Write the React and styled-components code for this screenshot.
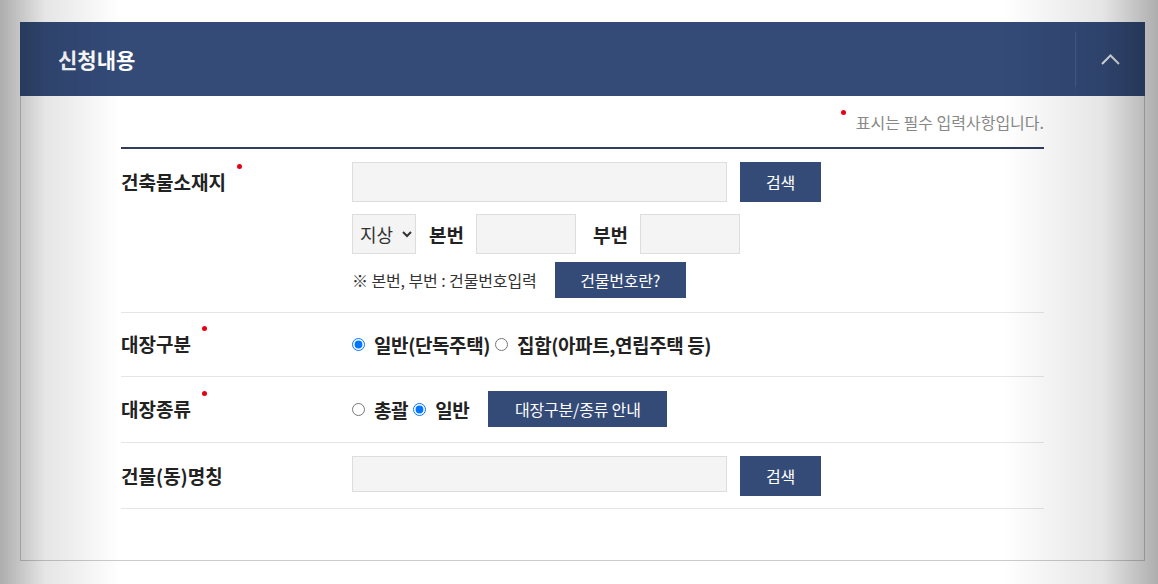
import React from "react";
import styled, { createGlobalStyle } from "styled-components";

const GlobalStyle = createGlobalStyle`
  html, body {
    margin: 0;
    padding: 0;
    background: #fff;
  }
  body {
    font-family: "Noto Sans CJK KR", "Noto Sans", sans-serif;
    color: #222;
  }
  * {
    box-sizing: border-box;
  }
`;

// soft lens shading on the sides of the shot, lies over everything
const Vignette = styled.div`
  position: fixed;
  inset: 0;
  pointer-events: none;
  z-index: 10;
  background:
    linear-gradient(to right, rgba(0, 0, 0, 0.32), rgba(0, 0, 0, 0.1) 45px, rgba(0, 0, 0, 0) 120px),
    linear-gradient(to left, rgba(0, 0, 0, 0.32), rgba(0, 0, 0, 0.1) 55px, rgba(0, 0, 0, 0) 155px);
`;

const Panel = styled.section`
  margin: 22px 0 0 20px;
  width: 1125px;
`;

const Header = styled.div`
  display: flex;
  align-items: center;
  height: 74px;
  padding-left: 38px;
  background: #344b78;
`;

const Title = styled.h2`
  flex: 1;
  margin: 0;
  font-size: 21px;
  font-weight: 700;
  color: #fff;
`;

const Toggle = styled.button`
  display: flex;
  align-items: center;
  justify-content: center;
  width: 70px;
  height: 55px;
  padding: 0;
  border: none;
  border-left: 1px solid rgba(255, 255, 255, 0.1);
  background: transparent;
  cursor: pointer;
`;

const Body = styled.div`
  border: 1px solid #ccc;
  border-top: none;
  padding: 0 100px 51px;
`;

const RequiredNote = styled.p`
  margin: 0 0 13px;
  padding-top: 14px;
  line-height: 24px;
  text-align: right;
  font-size: 16px;
  color: #888;
`;

const Dot = styled.span`
  display: inline-block;
  width: 5px;
  height: 5px;
  border-radius: 50%;
  background: #e60012;
  vertical-align: top;
  margin: ${(p) => (p.$note ? "0 10px 0 0" : "0 0 0 11px")};
`;

const FormTable = styled.div`
  border-top: 2px solid #2f3e5c;
`;

const Row = styled.div`
  display: grid;
  grid-template-columns: 231px 1fr;
  padding: 13px 0 ${(p) => (p.$last ? 12 : 14)}px;
  border-bottom: 1px solid #e5e5e5;
`;

const Label = styled.div`
  align-self: ${(p) => (p.$top ? "start" : "center")};
  margin-top: ${(p) => (p.$top ? 2 : 0)}px;
  line-height: 36px;
  font-size: 19px;
  font-weight: 700;
  color: #222;
`;

const Fields = styled.div`
  display: flex;
  flex-direction: column;
  gap: ${(p) => p.$gap || 0}px;
`;

const Line = styled.div`
  display: flex;
  align-items: ${(p) => p.$align || "center"};
  min-height: ${(p) => p.$min || 0}px;
  margin-top: ${(p) => p.$mt || 0}px;
`;

const TextInput = styled.input`
  width: ${(p) => p.$w}px;
  height: ${(p) => p.$h || 40}px;
  padding: 0 10px;
  border: 1px solid #ddd;
  background: #f4f4f4;
  font-family: inherit;
  font-size: 15px;
  outline: none;
`;

const NavyButton = styled.button`
  width: ${(p) => p.$w}px;
  height: ${(p) => p.$h || 40}px;
  margin-left: ${(p) => p.$ml || 0}px;
  padding: 0;
  border: none;
  background: #344b78;
  color: #fff;
  font-family: inherit;
  font-size: 16px;
  letter-spacing: -0.2px;
  cursor: pointer;
`;

const FloorSelect = styled.select`
  width: 64px;
  height: 40px;
  padding: 0 0 0 3px;
  border: 1px solid #ddd;
  background: #f4f4f4;
  font-family: inherit;
  font-size: 18px;
  color: #333;
`;

const InlineLabel = styled.span`
  margin: 0 12px 0 ${(p) => p.$ml}px;
  font-size: 19px;
  font-weight: 700;
  color: #222;
`;

const Hint = styled.span`
  font-size: 16px;
  letter-spacing: -0.1px;
  color: #333;
`;

const RadioLabel = styled.label`
  display: inline-flex;
  align-items: center;
  gap: 9px;
  margin-right: 5px;
  font-size: 19px;
  font-weight: 700;
  letter-spacing: -0.4px;
  color: #222;
  cursor: pointer;
`;

const Radio = styled.input`
  width: 13px;
  height: 13px;
  margin: 0;
`;

const ChevronUp = () => (
  <svg width="19" height="11" viewBox="0 0 19 11" fill="none">
    <polyline points="1,10 9.5,1.5 18,10" stroke="#e3e7ee" strokeWidth="2" />
  </svg>
);

const App = () => (
  <>
    <GlobalStyle />
    <Panel>
      <Header>
        <Title>신청내용</Title>
        <Toggle aria-label="접기">
          <ChevronUp />
        </Toggle>
      </Header>
      <Body>
        <RequiredNote>
          <Dot $note />
          표시는 필수 입력사항입니다.
        </RequiredNote>
        <FormTable>
          <Row>
            <Label $top>
              건축물소재지
              <Dot />
            </Label>
            <Fields $gap={12}>
              <Line>
                <TextInput $w={375} />
                <NavyButton $w={81} $ml={13}>검색</NavyButton>
              </Line>
              <Line>
                <FloorSelect defaultValue="지상">
                  <option>지상</option>
                  <option>지하</option>
                </FloorSelect>
                <InlineLabel $ml={13}>본번</InlineLabel>
                <TextInput $w={100} />
                <InlineLabel $ml={17}>부번</InlineLabel>
                <TextInput $w={100} />
              </Line>
              <Line $mt={-4}>
                <Hint>※ 본번, 부번 : 건물번호입력</Hint>
                <NavyButton $w={131} $h={36} $ml={18}>건물번호란?</NavyButton>
              </Line>
            </Fields>
          </Row>
          <Row>
            <Label>
              대장구분
              <Dot />
            </Label>
            <Line $min={36}>
              <RadioLabel>
                <Radio type="radio" name="ledgerType" defaultChecked />
                일반(단독주택)
              </RadioLabel>
              <RadioLabel>
                <Radio type="radio" name="ledgerType" />
                집합(아파트,연립주택 등)
              </RadioLabel>
            </Line>
          </Row>
          <Row>
            <Label>
              대장종류
              <Dot />
            </Label>
            <Line $min={38}>
              <RadioLabel>
                <Radio type="radio" name="ledgerKind" />
                총괄
              </RadioLabel>
              <RadioLabel>
                <Radio type="radio" name="ledgerKind" defaultChecked />
                일반
              </RadioLabel>
              <NavyButton $w={179} $h={36} $ml={14}>대장구분/종류 안내</NavyButton>
            </Line>
          </Row>
          <Row $last>
            <Label>건물(동)명칭</Label>
            <Line $align="flex-start">
              <TextInput $w={375} $h={36} />
              <NavyButton $w={81} $ml={13}>검색</NavyButton>
            </Line>
          </Row>
        </FormTable>
      </Body>
    </Panel>
    <Vignette />
  </>
);

export default App;
